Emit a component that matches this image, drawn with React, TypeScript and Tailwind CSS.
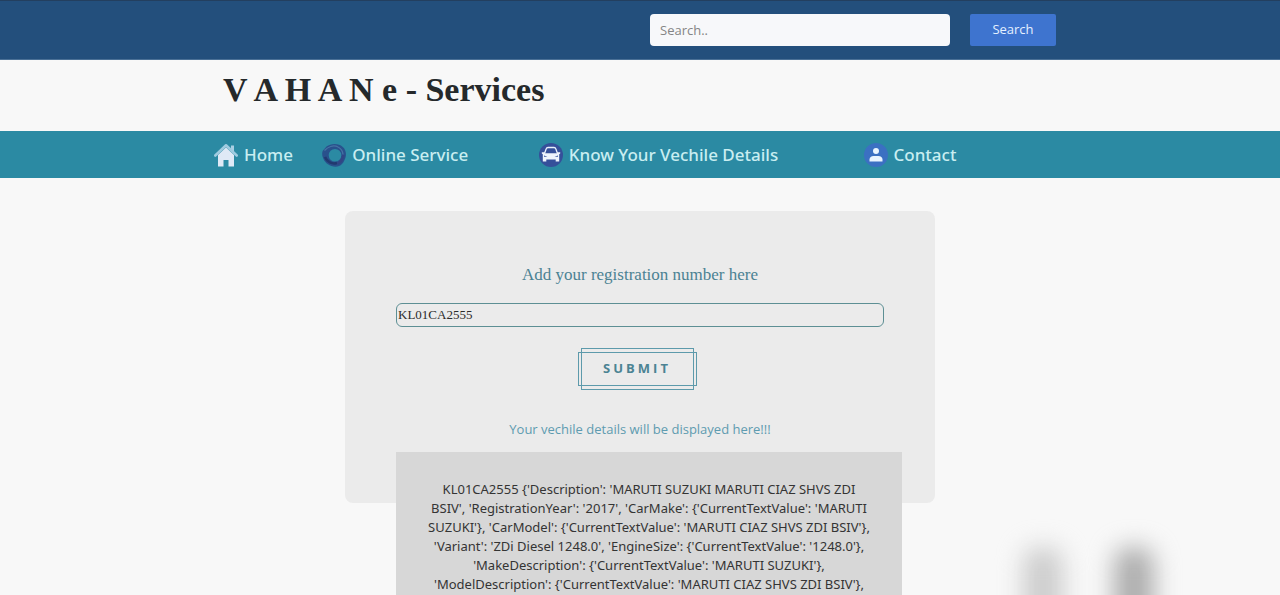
import { useState, type ReactNode } from "react";

const details = [
  "KL01CA2555 {'Description': 'MARUTI SUZUKI MARUTI CIAZ SHVS ZDI",
  "BSIV', 'RegistrationYear': '2017', 'CarMake': {'CurrentTextValue': 'MARUTI",
  "SUZUKI'}, 'CarModel': {'CurrentTextValue': 'MARUTI CIAZ SHVS ZDI BSIV'},",
  "'Variant': 'ZDi Diesel 1248.0', 'EngineSize': {'CurrentTextValue': '1248.0'},",
  "'MakeDescription': {'CurrentTextValue': 'MARUTI SUZUKI'},",
  "'ModelDescription': {'CurrentTextValue': 'MARUTI CIAZ SHVS ZDI BSIV'},",
];

function HomeIcon() {
  return (
    <svg viewBox="0 0 24 24" className="size-6 shrink-0" aria-hidden="true">
      <path d="M17 2.5h3V9l-3-2.8Z" fill="#a9cfe3" />
      <path d="M1.300 12.500 12 2.300l10.700 10.200" fill="none" stroke="#9fcbe0" strokeWidth="2.600" strokeLinecap="round" strokeLinejoin="round" />
      <path d="M4 12 12 4.500l8 7.500V23.500h-5.500V17h-5v6.500H4Z" fill="#dfe9f6" />
    </svg>
  );
}

function RingIcon() {
  return (
    <svg viewBox="0 0 24 24" className="size-6 shrink-0" aria-hidden="true">
      <path
        fillRule="evenodd"
        d="M4.500 3.500C9 0 17 .2 20.500 3.800 24 6.500 24.500 11 23.500 14.500 22 19.500 19 23.800 13.500 23.800 8 23.500 3 20 1.500 16-.5 12 .2 8.500 1 7.500Z M13 6a6.300 6.300 0 1 0 0 12.600A6.300 6.300 0 0 0 13 6Z"
        fill="#29518c"
      />
      <path d="M2.500 7.500c3-3.500 9-6 13.500-3.500 3 1.500 4.800 4.500 5 7.500" fill="none" stroke="#4672a3" strokeWidth="1.300" />
      <path d="M3 14c2 5 7 7.500 12 6" fill="none" stroke="#22396f" strokeWidth="2.500" />
      <path d="M21.500 12c-.5 4-2.500 7-6 9" fill="none" stroke="#334584" strokeWidth="2.500" />
    </svg>
  );
}

function CarIcon() {
  return (
    <svg viewBox="0 0 24 24" className="size-6 shrink-0" aria-hidden="true">
      <circle cx="12" cy="12" r="12" fill="#35509a" />
      <path d="M5.500 10.500 7.200 5.800c.3-.9.9-1.300 1.800-1.300h6c.9 0 1.500.4 1.800 1.300l1.700 4.700" fill="none" stroke="#e9f1fc" strokeWidth="1.300" />
      <path d="M2.800 9.300h2.700l.5 1h12l.5-1h2.700v1.300l-1 .6v7.300h-3.500v-2H7.300v2H3.800v-7.300l-1-.6Z" fill="#eef4fd" />
      <path d="m5 12.500 3.500 1.300H5Zm14 0-3.500 1.300H19Z" fill="#35509a" />
    </svg>
  );
}

function PersonIcon() {
  return (
    <svg viewBox="0 0 24 24" className="size-6 shrink-0" aria-hidden="true">
      <circle cx="12" cy="12" r="12" fill="#3b70c2" />
      <circle cx="12" cy="8" r="3" fill="#e8f4ff" />
      <path d="M5.500 18.500v-2c0-2 1.800-3.500 4-3.500h5c2.200 0 4 1.500 4 3.500v2Z" fill="#e8f4ff" />
    </svg>
  );
}

function NavItem({ icon, children }: { icon: ReactNode; children: ReactNode }) {
  return (
    <a href="#" className="flex items-center gap-1.5 whitespace-nowrap">
      {icon}
      <span>{children}</span>
    </a>
  );
}

export default function App() {
  const [registration, setRegistration] = useState("KL01CA2555");
  const [query, setQuery] = useState("");

  return (
    <div className="relative flex h-screen flex-col overflow-hidden bg-[#f8f8f8] font-['Open_Sans',sans-serif]">
      <header>
        <form
          className="flex h-15 items-center justify-end gap-5 border-y border-t-[#233f5f] border-b-[#4a7096] bg-[#234f7c] pr-56 text-[13px]"
          onSubmit={(e) => e.preventDefault()}
        >
          <input
            type="search"
            aria-label="Search"
            placeholder="Search.."
            value={query}
            onChange={(e) => setQuery(e.target.value)}
            className="h-8 w-[300px] rounded-sm bg-[#f7f8fa] px-2.5 text-[#333] outline-none placeholder:text-[#858585]"
          />
          <button type="submit" className="h-8 w-[86px] rounded-xs bg-[#3e74cf] text-[#e4f0ff]">
            Search
          </button>
        </form>
        <h1 className="flex h-[71px] items-center px-[223px] pb-3 font-['Liberation_Serif',serif] text-[34px] font-bold text-[#25292b]">
          V A H A N e - Services
        </h1>
        <nav className="grid h-[47px] grid-cols-[1fr_2fr_3fr_2fr] items-center bg-[#2b8aa3] pr-[200px] pl-[214px] font-['Noto_Sans',sans-serif] text-[17px] font-medium text-[#c9eef1]">
          <NavItem icon={<HomeIcon />}>Home</NavItem>
          <NavItem icon={<RingIcon />}>Online Service</NavItem>
          <NavItem icon={<CarIcon />}>Know Your Vechile Details</NavItem>
          <NavItem icon={<PersonIcon />}>Contact</NavItem>
        </nav>
      </header>

      <main className="flex justify-center pt-[33px]">
        <section className="h-[292px] w-[590px] rounded-lg bg-[#ebebeb] px-[51px] pt-[52px]">
          <form className="flex flex-col items-center" onSubmit={(e) => e.preventDefault()}>
            <label htmlFor="registration" className="font-['Liberation_Serif',serif] text-[17px] leading-6 text-[#4b8293]">
              Add your registration number here
            </label>
            <input
              id="registration"
              value={registration}
              onChange={(e) => setRegistration(e.target.value)}
              className="mt-4 h-6 w-full rounded-md border border-[#5d8f94] px-px font-['Liberation_Serif',serif] text-[13px] text-[#2b2b2b] outline-none"
            />
            <button
              type="submit"
              className="relative mt-[21px] mr-1.5 h-[42px] w-[113px] border border-[#5d9aab] text-[13px] font-bold tracking-[3px] text-[#4b8393] before:absolute before:-inset-x-1 before:inset-y-[3px] before:border before:border-[#5d9aab]"
            >
              SUBMIT
            </button>
          </form>
          <p className="mt-[29px] text-center text-[13px] leading-5 text-[#5e9bb0]">
            Your vechile details will be displayed here!!!
          </p>
          <output
            htmlFor="registration"
            className="mt-[13px] block w-[506px] bg-[#d7d7d7] pt-7 pb-10 text-center font-['Noto_Sans',sans-serif] text-[13px] leading-[19px] text-[#343434]"
          >
            {details.map((line) => (
              <span key={line} className="block whitespace-nowrap">
                {line}
              </span>
            ))}
          </output>
        </section>
      </main>

      <div className="absolute right-[217px] -bottom-10 h-22 w-10 rounded-2xl bg-[#cdcdcd] blur-[12px]" />
      <div className="absolute right-[126px] -bottom-10 h-22 w-10 rounded-2xl bg-[#adadad] blur-[12px]" />
    </div>
  );
}
